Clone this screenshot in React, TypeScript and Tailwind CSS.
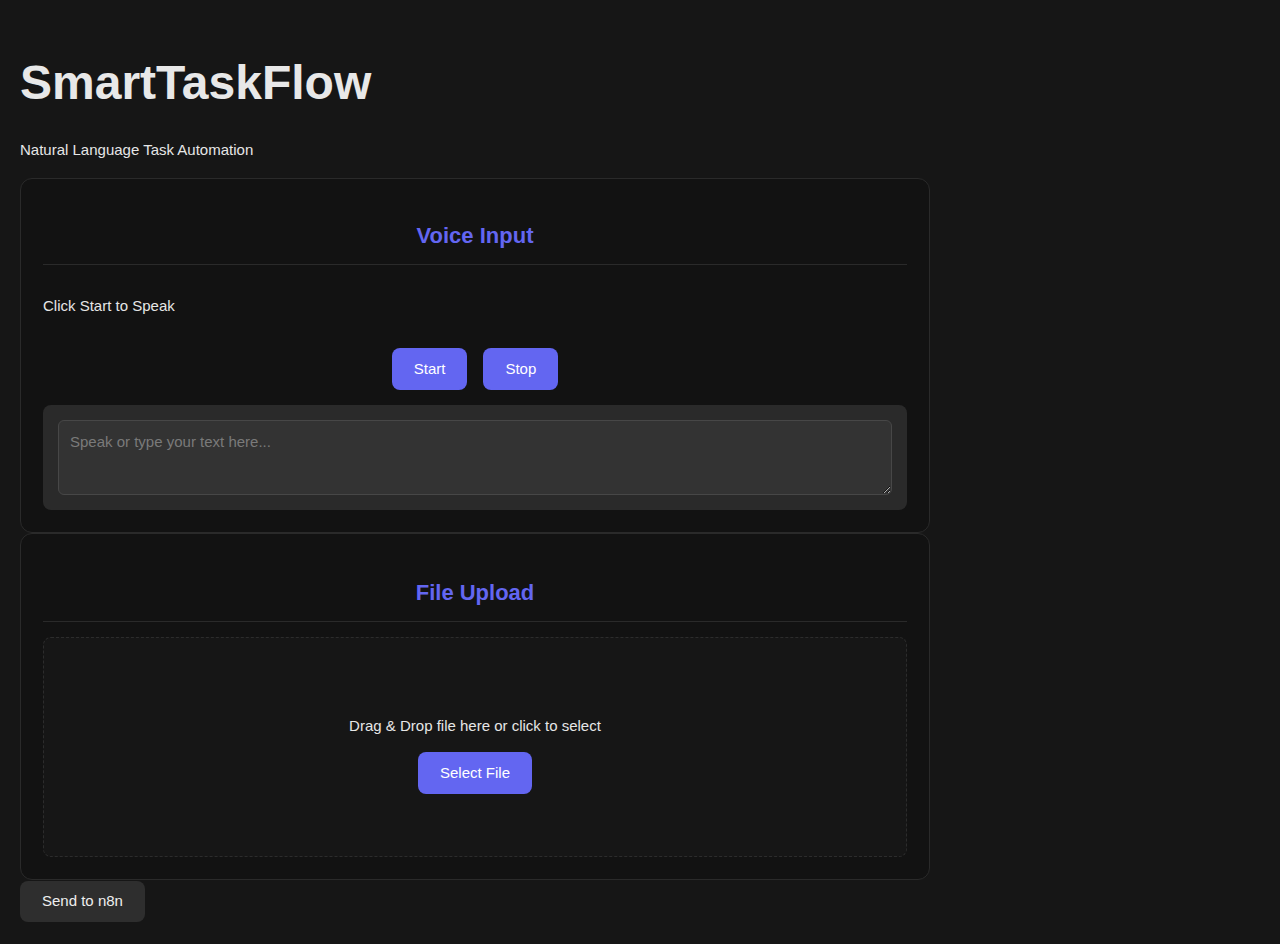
import { useState } from 'react';

const Card = ({ title, top, children }: { title: string; top: string; children: React.ReactNode }) => (
  <section className="rounded-xl border border-[#2a2a2a] bg-[#121212] p-[22px]">
    <h2 className={`${top} border-b border-[#2a2a2a] pb-[15px] text-center text-[22px] font-bold leading-[26px] text-[#6366f1]`}>
      {title}
    </h2>
    {children}
  </section>
);

const App = () => {
  const [text, setText] = useState('');

  return (
    <div className="min-h-screen bg-[#161616] px-5 pt-[55px] pb-[23px] font-['Liberation_Sans',Arial,sans-serif] text-[#e6e6e6]">
      <h1 className="text-[48px] font-bold leading-[55px] text-[#e8e8e8]">SmartTaskFlow</h1>
      <p className="mt-[31px] text-[15px] leading-[18px]">Natural Language Task Automation</p>

      <div className="mt-[19px] w-[910px]">
        <Card title="Voice Input" top="mt-[22px]">
          <p className="mt-[32px] text-[15px] leading-[18px]">Click Start to Speak</p>
          <div className="mt-[33px] flex justify-center gap-4">
            <button className="h-[42px] rounded-lg bg-[#6366f1] px-[22px] text-[15px] text-white">Start</button>
            <button className="h-[42px] rounded-lg bg-[#6366f1] px-[22px] text-[15px] text-white">Stop</button>
          </div>
          <div className="mt-[15px] rounded-lg bg-[#2a2a2a] p-[15px]">
            <textarea
              value={text}
              onChange={(e) => setText(e.target.value)}
              placeholder="Speak or type your text here..."
              className="block h-[75px] w-full rounded-md border border-[#474747] bg-[#333333] px-[11px] py-[12px] text-[15px] leading-[18px] text-[#e6e6e6] outline-none placeholder:text-[#7a7a7a]"
            />
          </div>
        </Card>

        <Card title="File Upload" top="mt-[24px]">
          <div className="mt-[15px] flex flex-col items-center rounded-lg border border-dashed border-[#2c2c2c] bg-[#161616] pt-[79px] pb-[62px]">
            <p className="text-[15px] leading-[18px]">Drag &amp; Drop file here or click to select</p>
            <button className="mt-[17px] h-[42px] rounded-lg bg-[#6366f1] px-[22px] text-[15px] text-white">Select File</button>
          </div>
        </Card>
      </div>

      <button className="mt-px h-[41px] rounded-lg bg-[#2e2e2e] px-[22px] text-[15px] text-[#eeeeee]">Send to n8n</button>
    </div>
  );
};

export default App;
